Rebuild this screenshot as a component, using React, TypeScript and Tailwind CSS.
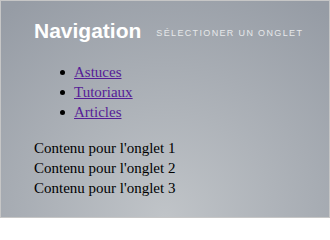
import React from "react";

export default function App() {
  const links = ["Astuces", "Tutoriaux", "Articles"];
  const contents = ["Contenu pour l'onglet 1", "Contenu pour l'onglet 2", "Contenu pour l'onglet 3"];
  return (
    <div className="w-[330px] h-[218px] border border-[#c6c6c6] bg-[radial-gradient(circle_260px_at_50%_100%,#c0c4c8,#969ca5)] overflow-hidden">
      <div className="flex items-start pt-[18px] pl-[33px]">
        <h1 className="m-0 text-[21px] leading-[24px] font-bold text-white font-['Liberation_Sans',Arial,sans-serif]">
          Navigation
        </h1>
        <span className="ml-[15px] mt-[8px] text-[9px] leading-[12px] tracking-[1.35px] uppercase text-[#e6e8ea] font-['Liberation_Sans',Arial,sans-serif]">
          Sélectioner un onglet
        </span>
      </div>
      <ul className="mt-[19px] pl-[59px] font-['Liberation_Serif','Times_New_Roman',serif] text-[15px] leading-[20px]">
        {links.map((l) => (
          <li key={l} className="flex items-center gap-[9px] h-[20px]">
            <span className="w-[5px] h-[5px] rounded-full bg-black shrink-0" />
            <a href="#" className="text-[#561c96] underline">
              {l}
            </a>
          </li>
        ))}
      </ul>
      <div className="mt-[16px] pl-[33px] font-['Liberation_Serif','Times_New_Roman',serif] text-[15px] leading-[20px] text-black">
        {contents.map((c) => (
          <div key={c}>{c}</div>
        ))}
      </div>
    </div>
  );
}
